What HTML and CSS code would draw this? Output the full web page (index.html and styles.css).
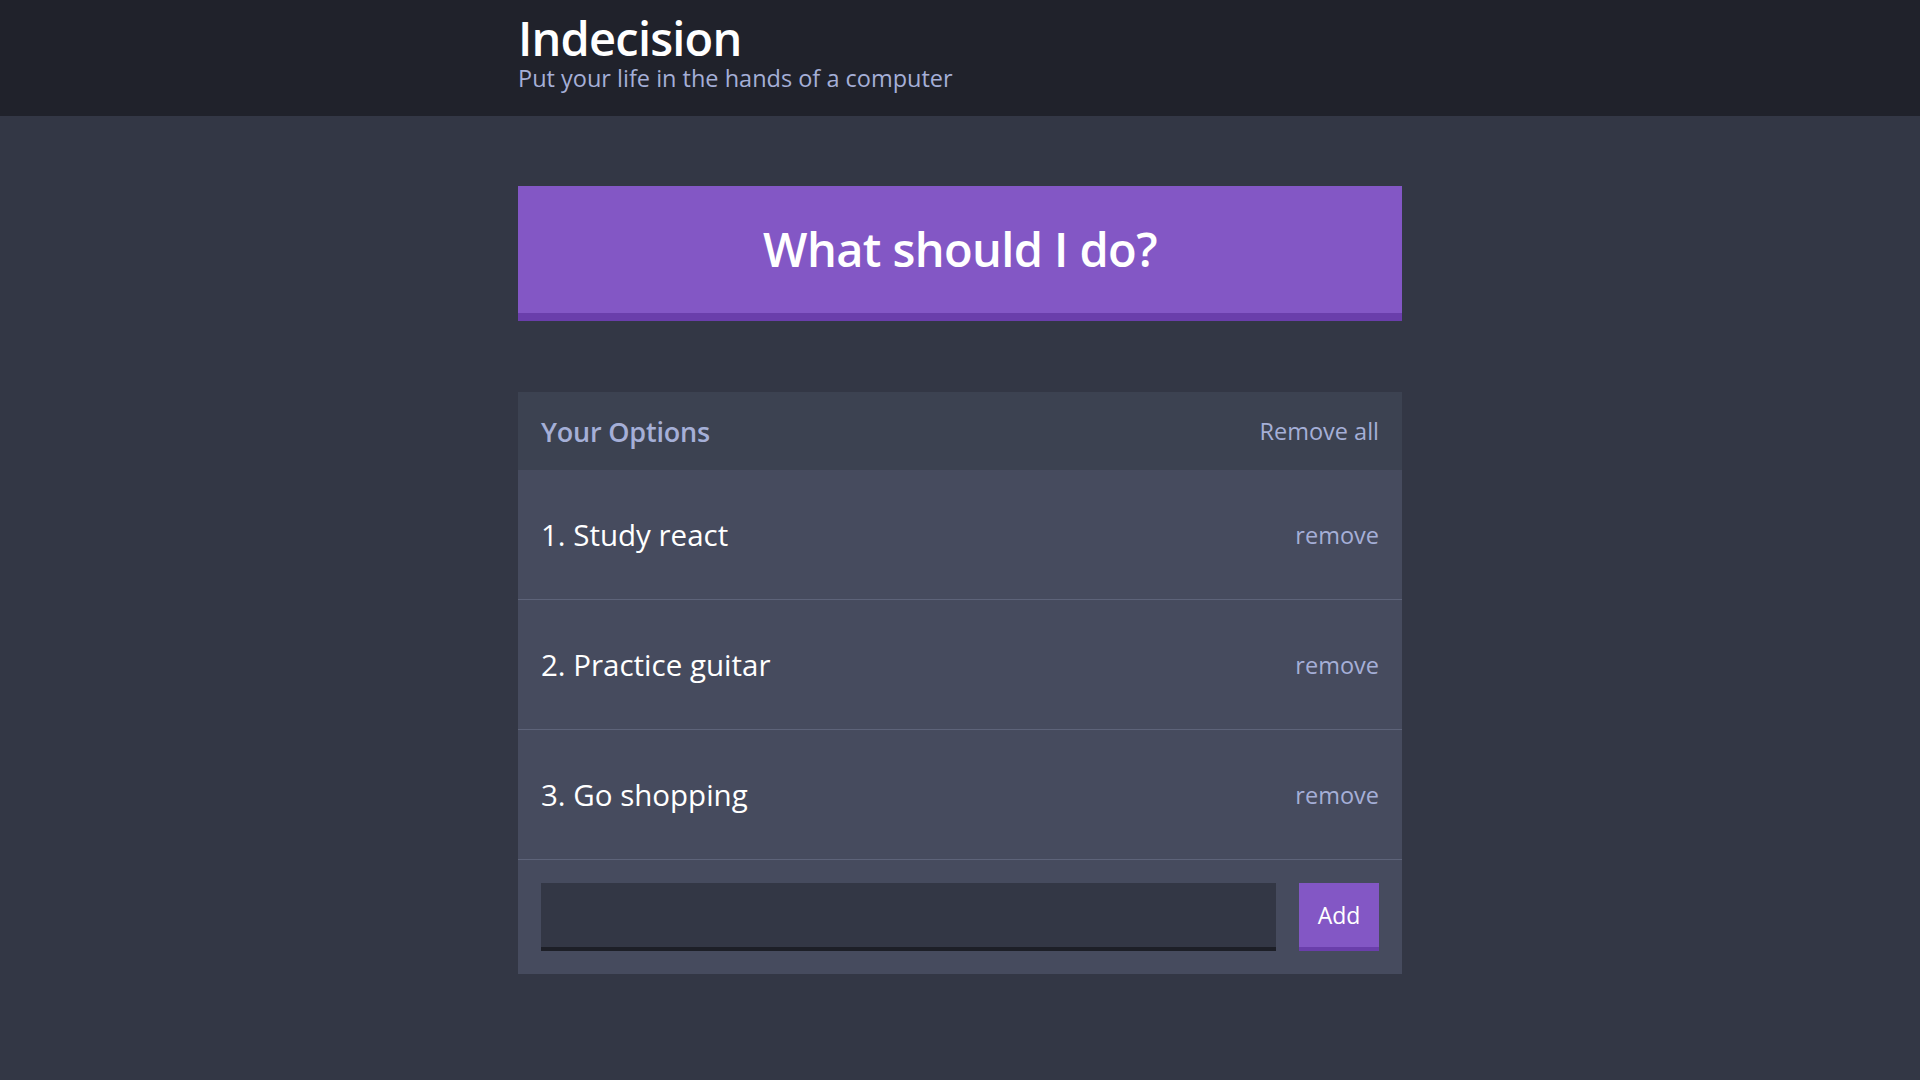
FILE: index.html
```html
<!DOCTYPE html>
<html lang="en">
<head>
<meta charset="utf-8">
<title>Indecision</title>
<link rel="stylesheet" href="styles.css">
</head>
<body>
<header class="header">
  <div class="container">
    <h1 class="header__title">Indecision</h1>
    <h2 class="header__subtitle">Put your life in the hands of a computer</h2>
  </div>
</header>
<main class="container main">
  <button class="big-button">What should I do?</button>
  <section class="widget">
    <div class="widget-header">
      <h3 class="widget-header__title">Your Options</h3>
      <button class="button--link">Remove all</button>
    </div>
    <div class="option">
      <p class="option__text">1. Study react</p>
      <button class="button--link option__remove">remove</button>
    </div>
    <div class="option">
      <p class="option__text">2. Practice guitar</p>
      <button class="button--link option__remove">remove</button>
    </div>
    <div class="option">
      <p class="option__text">3. Go shopping</p>
      <button class="button--link option__remove">remove</button>
    </div>
    <form class="add-option">
      <input class="add-option__input" type="text" name="option">
      <button class="button" type="button">Add</button>
    </form>
  </section>
</main>
</body>
</html>
```
FILE: styles.css
```css
* { box-sizing: border-box; }
html, body { margin: 0; padding: 0; }
body {
  background: #333745;
  color: #ffffff;
  font-family: "Open Sans", "Noto Sans", sans-serif;
  min-height: 1080px;
}
button, input { font-family: inherit; }
.container {
  width: 884px;
  margin: 0 auto;
}
.header {
  background: #20222b;
  height: 116px;
  padding-top: 14px;
}
.header__title {
  margin: 0;
  font-size: 47px;
  line-height: 49px;
  font-weight: 600;
  letter-spacing: -0.8px;
  color: #ffffff;
}
.header__subtitle {
  margin: 0;
  font-size: 23.5px;
  line-height: 30px;
  font-weight: 400;
  color: #a5afd7;
}
.main {
  padding-top: 70px;
}
.big-button {
  display: block;
  width: 100%;
  height: 135px;
  background: #8357c5;
  border: none;
  border-bottom: 8px solid #6a3eab;
  color: #ffffff;
  font-size: 47px;
  font-weight: 600;
  padding: 0 0 2px;
  margin: 0 0 71px;
  letter-spacing: -0.6px;
}
.widget {
  background: #464b5e;
}
.widget-header {
  background: #3c4251;
  height: 78px;
  display: flex;
  align-items: center;
  justify-content: space-between;
  padding: 0 23px;
}
.widget-header__title {
  margin: 0;
  font-size: 27px;
  font-weight: 600;
  letter-spacing: -0.2px;
  color: #a5afd7;
}
.button--link {
  background: none;
  border: none;
  padding: 0;
  color: #a5afd7;
  font-size: 23.5px;
}
.option {
  height: 130px;
  border-bottom: 1px solid #5d6379;
  display: flex;
  align-items: center;
  justify-content: space-between;
  padding: 0 23px;
}
.option__text {
  margin: 0;
  font-size: 29.5px;
  color: #ffffff;
}
.add-option {
  display: flex;
  padding: 23px;
  margin: 0;
}
.add-option__input {
  flex: 1;
  height: 68px;
  background: #333745;
  border: none;
  border-bottom: 4px solid #1d1f27;
  margin-right: 23px;
  color: #a5afd7;
  outline: none;
}
.button {
  width: 80px;
  height: 68px;
  background: #8357c5;
  border: none;
  border-bottom: 4px solid #6a3eab;
  color: #ffffff;
  font-size: 23px;
  padding: 0;
}
```
